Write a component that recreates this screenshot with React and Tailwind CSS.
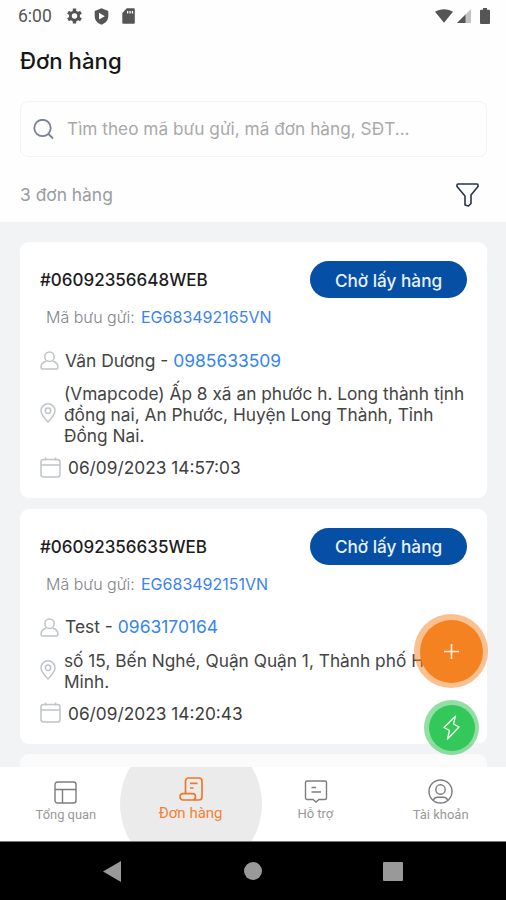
const orders = [
  {
    id: '#06092356648WEB',
    code: 'EG683492165VN',
    name: 'Vân Dương',
    phone: '0985633509',
    address: ['(Vmapcode) Ấp 8 xã an phước h. Long thành tịnh', 'đồng nai, An Phước, Huyện Long Thành, Tỉnh', 'Đồng Nai.'],
    date: '06/09/2023 14:57:03',
  },
  {
    id: '#06092356635WEB',
    code: 'EG683492151VN',
    name: 'Test',
    phone: '0963170164',
    address: ['số 15, Bến Nghé, Quận Quận 1, Thành phố Hồ', 'Minh.'],
    date: '06/09/2023 14:20:43',
  },
];

// --- Status bar ---
const StatusBar = () => (
  <div className="flex h-8 items-center pl-[18px] pr-[16px] text-[#555]">
    <span className="w-[49px] pt-px font-[Roboto] text-[17.5px] leading-none">6:00</span>
    <svg className="mr-[12px] h-[16px] w-[15px]" viewBox="0 0 15 16" fill="none" stroke="currentColor">
      <circle cx="7.5" cy="8" r="4.1" strokeWidth="2.8" />
      <path d="M7.5 .5v3M7.5 12.5v3M1 4.2l2.7 1.6M11.3 10.2l2.7 1.6M1 11.8l2.7-1.6M11.3 5.8L14 4.2" strokeWidth="3.4" />
    </svg>
    <svg className="mr-[13px] h-[17px] w-[15px]" viewBox="0 0 15 17" fill="currentColor">
      <path fillRule="evenodd" d="M7.5 .3L14.3 3v5.2c0 3.8-2.6 7-6.8 8.5C3.3 15.2.7 12 .7 8.2V3zM5 4.8v6.8l5.8-3.4z" />
    </svg>
    <svg className="h-[16px] w-[13px]" viewBox="0 0 13 16" fill="currentColor">
      <path fillRule="evenodd" d="M4.8 .3h7a1 1 0 0 1 1 1v13.4a1 1 0 0 1-1 1H1.3a1 1 0 0 1-1-1V5zM5 3v2.6h1.3V3zM7.4 3v2.6h1.3V3zM9.8 3v2.6h1.3V3z" />
    </svg>
    <div className="ml-auto flex items-center">
      <svg className="mr-[4px] h-[14px] w-[18px]" viewBox="0 0 18 14" fill="currentColor">
        <path d="M0 2.8C5-.7 13-.7 18 2.8L9 13.8z" />
      </svg>
      <svg className="mr-[9px] h-[14px] w-[14px]" viewBox="0 0 14 14" fill="currentColor">
        <path d="M14 0v14H0z" opacity=".35" />
        <path d="M8.5 5.5V14H0z" />
      </svg>
      <svg className="h-[16px] w-[10px]" viewBox="0 0 10 16" fill="currentColor">
        <path d="M3 0h4v1.7h2a1 1 0 0 1 1 1V15a1 1 0 0 1-1 1H1a1 1 0 0 1-1-1V2.7a1 1 0 0 1 1-1h2z" />
      </svg>
    </div>
  </div>
);

// --- Order card ---
const OrderCard = ({ order }) => (
  <div className="rounded-[9px] bg-white px-5 pb-[19.5px] pt-[19.6px]">
    <div className="flex h-[37px] items-center justify-between">
      <span className="whitespace-nowrap pt-[2px] text-[17px] font-medium text-[#1c1c1c]">{order.id}</span>
      <span className="flex h-[37px] w-[157px] items-center justify-center rounded-full bg-[#0550a5] pt-px text-[17.2px] font-medium text-[#e8f1fc]">
        Chờ lấy hàng
      </span>
    </div>
    <div className="mt-[7.5px] flex h-[22px] items-center whitespace-nowrap pl-[6px] text-[16px]">
      <span className="w-[95px] font-light text-[#7f8489]">Mã bưu gửi:</span>
      <span className="text-[#3b82f6]">{order.code}</span>
    </div>
    <div className="mt-[21.2px] flex h-[22px] items-center whitespace-nowrap text-[17.45px] text-[#444]">
      <svg className="mr-[6px] h-[19px] w-[19px] shrink-0" viewBox="0 0 19 19" fill="none" stroke="#bfc4c9" strokeWidth="1.5">
        <circle cx="9.5" cy="5.7" r="4.7" />
        <path d="M6.3 10C3 11 1 13.5 1 16.5c0 1 .5 1.5 1.5 1.5h14c1 0 1.5-.5 1.5-1.5 0-3-2-5.500-5.300-6.500" />
      </svg>
      <span className="pt-px">{order.name} - <span className="text-[#3584f5]">{order.phone}</span></span>
    </div>
    <div className="mt-[11.5px] flex items-center">
      <svg className="relative -top-px mr-[8px] h-[20px] w-[16px] shrink-0" viewBox="0 0 16 20" fill="none" stroke="#bfc4c9" strokeWidth="1.5">
        <path d="M8 19C5.5 16.5 1 12 1 7.8a7 7 0 0 1 14 0C15 12 10.5 16.5 8 19z" />
        <circle cx="8" cy="7.7" r="2.7" />
      </svg>
      <div className="text-[17.3px] leading-[21.2px] text-[#444]">
        {order.address.map((line) => (
          <p key={line} className="whitespace-nowrap">{line}</p>
        ))}
      </div>
    </div>
    <div className="mt-[9.5px] flex h-[23px] items-center whitespace-nowrap text-[17.3px] text-[#3d3d3d]">
      <svg className="mr-[7px] h-[21px] w-[21px] shrink-0" viewBox="0 0 21 21" fill="none" stroke="#bfc4c9" strokeWidth="1.5">
        <rect x="1" y="2.5" width="19" height="17.5" rx="2.5" />
        <path d="M1 8h19M5.5 .5v3M15.5 .5v3" />
      </svg>
      <span className="pt-px">{order.date}</span>
    </div>
  </div>
);

// --- Bottom tabs ---
const TabBar = () => (
  <div className="relative z-10 flex h-[74px] shrink-0 overflow-hidden bg-white px-[3.5px] font-[Roboto] text-[13px] text-[#999]">
    <div className="flex w-[125px] flex-col items-center pt-[14px]">
      <svg className="h-[23px] w-[23px]" viewBox="0 0 23 23" fill="none" stroke="#7d7d7d" strokeWidth="1.4">
        <rect x="1" y="1" width="21" height="21" rx="2.5" />
        <path d="M1 8.5h21M8.5 8.5V22" />
      </svg>
      <span className="mt-[2px] text-[12.9px] leading-[18px]">Tổng quan</span>
    </div>
    <div className="relative flex w-[125px] flex-col items-center pt-[10px] text-[#f58232]">
      <div className="absolute -top-[34px] -left-[8.5px] h-[142px] w-[142px] rounded-full bg-[#ebebeb]" />
      <svg className="relative h-[24px] w-[24px]" viewBox="0 0 24 24" fill="none" stroke="#ef7a26" strokeWidth="1.7">
        <rect x="1" y="16.7" width="15.5" height="6.3" rx="3" />
        <path d="M6.5 16.5V4A3 3 0 0 1 9.5 1H20a3 3 0 0 1 3 3v16a3 3 0 0 1-3 3h-6M11 6.3h7.5M11 11h3.5" />
      </svg>
      <span className="relative mt-[2px] text-[15px] leading-[20px]">Đơn hàng</span>
    </div>
    <div className="flex w-[125px] flex-col items-center pt-[13px]">
      <svg className="ml-px h-[23px] w-[24px]" viewBox="0 0 24 23" fill="none" stroke="#7d7d7d" strokeWidth="1.4">
        <path d="M3 1h18a1.5 1.5 0 0 1 1.5 1.5V18a1.5 1.5 0 0 1-1.5 1.5h-6L12 22l-3-2.5H3A1.5 1.5 0 0 1 1.5 18V2.5A1.5 1.5 0 0 1 3 1zM7.5 7.5H12M7.5 12h9.5" />
      </svg>
      <span className="mt-[2px] leading-[18px]">Hỗ trợ</span>
    </div>
    <div className="flex w-[125px] flex-col items-center pl-px pt-[12px]">
      <svg className="h-[25px] w-[25px]" viewBox="0 0 25 25" fill="none" stroke="#7d7d7d" strokeWidth="1.4">
        <circle cx="12.5" cy="12.5" r="11.5" />
        <circle cx="12.5" cy="10.5" r="4.7" />
        <path d="M5.5 21.5c.5-2.500 2-3.200 4-3.200h6c2 0 3.500.7 4 3.200" />
      </svg>
      <span className="mt-[2px] leading-[18px]">Tài khoản</span>
    </div>
  </div>
);

const App = () => {
  return (
    <div className="relative flex h-[900px] w-[506px] flex-col overflow-hidden bg-[#f1f3f5] font-[Inter,sans-serif]">
      <header className="h-[222px] shrink-0 bg-[#fefefe]">
        <StatusBar />
        <h1 className="ml-5 mt-[14px] text-[22.2px] font-medium leading-[30px] text-[#161616]">Đơn hàng</h1>
        <div className="ml-5 mr-[19px] mt-[25px] flex h-[56px] items-center rounded-[8px] border border-[#f3f3f4] pl-[12px]">
          <svg className="mr-[13px] h-[21px] w-[21px]" viewBox="0 0 21 21" fill="none" stroke="#78818f" strokeWidth="1.8">
            <circle cx="9.5" cy="9" r="8.2" />
            <path d="M15.5 15l4.5 4.5" />
          </svg>
          <span className="whitespace-nowrap text-[17.25px] text-[#a9a9a9]">Tìm theo mã bưu gửi, mã đơn hàng, SĐT...</span>
        </div>
        <div className="ml-5 mr-[27px] mt-[25px] flex h-[26px] items-center justify-between">
          <span className="pt-px text-[17.4px] text-[#989da3]">3 đơn hàng</span>
          <svg className="h-[24px] w-[23px]" viewBox="0 0 23 24" fill="none" stroke="#26344b" strokeWidth="1.6" strokeLinejoin="round">
            <path d="M2 1h19a1 1 0 0 1 1 1v1.5L15 12v8.500L12.500 23 9 22V13L1 3.500V2a1 1 0 0 1 1-1z" />
          </svg>
        </div>
      </header>

      <main className="flex min-h-0 flex-1 flex-col gap-[10.5px] overflow-hidden pl-5 pr-[19px] pt-[19.9px]">
        {orders.map((order) => (
          <OrderCard key={order.id} order={order} />
        ))}
        <div className="h-[60px] shrink-0 rounded-[9px] bg-[#fbfbfc]" />
      </main>

      {/* Floating actions */}
      <div className="absolute left-[414px] top-[614px] flex h-[74px] w-[74px] items-center justify-center rounded-full bg-[#f58220]/50">
        <div className="flex h-[63px] w-[63px] items-center justify-center rounded-full bg-[#f58220]">
          <svg className="h-[15px] w-[15px]" viewBox="0 0 15 15" stroke="#fff3e6" strokeWidth="1.6">
            <path d="M7.5 0v15M0 7.5h15" />
          </svg>
        </div>
      </div>
      <div className="absolute left-[424px] top-[700px] flex h-[55px] w-[55px] items-center justify-center rounded-full bg-[#34c759]/55">
        <div className="flex h-[46px] w-[46px] items-center justify-center rounded-full bg-[#34c759]">
          <svg className="h-[25px] w-[17px]" viewBox="0 0 17 25" fill="none" stroke="#effff2" strokeWidth="1.4" strokeLinejoin="round">
            <path d="M12.5 1.2L1 12.5l5.5 3L4.5 24 16 12l-5.500-3z" />
          </svg>
        </div>
      </div>

      <TabBar />

      {/* System navigation */}
      <div className="flex h-[59px] shrink-0 items-center border-t border-[#777] bg-black pl-[103px]">
        <svg className="h-[21px] w-[18px]" viewBox="0 0 18 21" fill="#999">
          <path d="M18 0v21L0 10.5z" />
        </svg>
        <div className="ml-[123px] h-[18px] w-[18px] rounded-full bg-[#999]" />
        <div className="ml-[121px] h-[19px] w-[20px] rounded-[1px] bg-[#999]" />
      </div>
    </div>
  );
};

export default App;
